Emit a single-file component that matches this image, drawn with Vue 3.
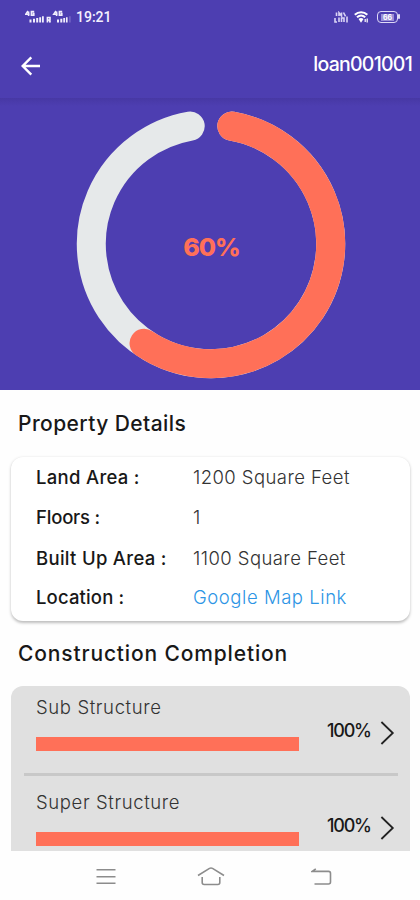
<script setup>
import { ref, computed } from 'vue'

const loanId = ref('loan001001')
const progress = ref(60)

const details = ref([
  { key: 'land', label: 'Land Area :', value: '1200 Square Feet' },
  { key: 'floors', label: 'Floors :', value: '1' },
  { key: 'built', label: 'Built Up Area :', value: '1100 Square Feet' },
  { key: 'location', label: 'Location :', value: 'Google Map Link', link: true }
])

const stages = ref([
  { key: 'sub', name: 'Sub Structure', percent: 100 },
  { key: 'super', name: 'Super Structure', percent: 100 }
])

// ring geometry: the arc leaves a 20 degree gap at the top
const radius = 119.7
const gap = 10

const point = (deg) => {
  const rad = (deg * Math.PI) / 180
  const x = 135 + radius * Math.sin(rad)
  const y = 135 - radius * Math.cos(rad)
  return `${x.toFixed(2)} ${y.toFixed(2)}`
}

const arc = (from, to) => {
  const large = to - from > 180 ? 1 : 0
  return `M${point(from)} A${radius} ${radius} 0 ${large} 1 ${point(to)}`
}

const track = computed(() => arc(gap, 360 - gap))
const filled = computed(() =>
  arc(gap, gap + ((360 - gap * 2) * progress.value) / 100)
)
</script>

<template>
  <div class="screen">
    <header class="top">
      <div class="status">
        <div class="status-left">
          <svg class="signal" width="46" height="14" viewBox="0 0 46 14">
            <g fill="none" stroke="#f1eefd" stroke-width="1.6">
              <path d="M3 1 L.8 4.2 H4.6 M3.6 1.6 V6" />
              <path d="M9.2 1.6 H6.4 V5.2 H8.8 V3.6 H7.6" />
              <path d="M31 1 L28.8 4.2 H32.6 M31.6 1.6 V6" />
              <path d="M37.2 1.6 H34.4 V5.2 H36.8 V3.6 H35.6" />
              <path d="M22.4 12.5 V7.5 H25 V10 H22.4 M24 10 L25.4 12.5" />
            </g>
            <g fill="#f1eefd">
              <path d="M4.5 9.5h2v3h-2z M8 8.8h2v3.7h-2z M11.2 8h2v4.5h-2z M14.2 7.2h1.9v5.3h-1.9z M17 6.3h1.8v6.2h-1.8z" />
              <path d="M32 9.5h2v3h-2z M35.3 8.8h2v3.7h-2z M38.3 8h1.8v4.5h-1.8z M41 7.2h1.6v5.3h-1.6z" />
            </g>
            <path d="M44.3 6.3h1.2v6.2h-1.2z" fill="#8273cb" />
          </svg>
          <span class="clock">19:21</span>
        </div>
        <div class="status-right">
          <svg width="15" height="13" viewBox="0 0 15 13">
            <g fill="none" stroke="#d9d3f5" stroke-width="1.6">
              <path d="M2.5 1.5 V5 M5 5 V1.8 L7.5 5 V1.5 M9.5 1.5 L11.5 5.4" />
              <path d="M1 7 V11 H3 M5 6.5 V11 M7.5 11 V7 H10 V11 M13 5.5 V11.5" />
            </g>
          </svg>
          <svg width="15" height="13" viewBox="0 0 15 13">
            <path
              d="M.8 3.8 C4.5 .4 9.8 .4 13.3 3.8 M3 6.3 C5.5 4.1 8.7 4.1 11.2 6.3"
              fill="none"
              stroke="#fff"
              stroke-width="2.1"
            />
            <path d="M4.6 8 Q7 6.2 9.5 8 L7 11.8Z" fill="#fff" />
            <path d="M11.2 8v3 M13.2 7.5v4" stroke="#fff" stroke-width="1.2" />
          </svg>
          <div class="battery"><span>66</span></div>
        </div>
      </div>
      <div class="bar">
        <button class="back" aria-label="Back">
          <svg width="20" height="20" viewBox="0 0 20 20">
            <path
              d="M19 10 H2 M10.3 1.4 L1.7 10 L10.3 18.6"
              fill="none"
              stroke="#fff"
              stroke-width="2.4"
            />
          </svg>
        </button>
        <h1 class="loan">{{ loanId }}</h1>
      </div>
    </header>

    <section class="hero">
      <svg class="ring" width="270" height="270" viewBox="0 0 270 270">
        <path :d="track" class="ring-track" />
        <path :d="filled" class="ring-fill" />
        <text x="135.5" y="146.6" class="ring-text">{{ progress }}%</text>
      </svg>
    </section>

    <main class="content">
      <h2 class="heading property">Property Details</h2>
      <div class="card">
        <div
          v-for="item in details"
          :key="item.key"
          class="row"
          :class="item.key"
        >
          <span class="label">{{ item.label }}</span>
          <span class="value" :class="{ link: item.link }">{{ item.value }}</span>
        </div>
      </div>

      <h2 class="heading construction">Construction Completion</h2>
      <div class="stages">
        <div
          v-for="stage in stages"
          :key="stage.key"
          class="stage"
          :class="stage.key"
        >
          <div class="stage-main">
            <div class="stage-name">{{ stage.name }}</div>
            <div class="meter">
              <div class="meter-fill" :style="{ width: stage.percent + '%' }"></div>
            </div>
          </div>
          <span class="percent">{{ stage.percent }}%</span>
          <svg class="chevron" width="15" height="26" viewBox="0 0 15 26">
            <path
              d="M1.4 2 L12.8 13 L1.4 24"
              fill="none"
              stroke="#222"
              stroke-width="1.8"
            />
          </svg>
        </div>
      </div>
    </main>

    <nav class="nav">
      <svg class="menu" width="20" height="18" viewBox="0 0 20 18">
        <path d="M.5 1.7H19.5 M.5 8.7H19.5 M.5 15.3H19.5" />
      </svg>
      <svg class="home" width="28" height="19" viewBox="0 0 28 19">
        <path d="M1 8.5 L12.5 1.4 Q14 .6 15.5 1.4 L27 8.5 M5.2 10 V15.5 Q5.2 17.5 7.2 17.5 H20.8 Q22.8 17.5 22.8 15.5 V10" />
      </svg>
      <svg class="return" width="21" height="18" viewBox="0 0 21 18">
        <path d="M4.8 .8 L1.3 3.4 H17.5 Q19.5 3.4 19.5 5.4 V14 Q19.5 16 17.5 16 H3.5" />
      </svg>
    </nav>
  </div>
</template>

<style>
body {
  background: #fefefe;
  overflow: hidden;
}
</style>

<style scoped>
.screen {
  width: 420px;
  height: 900px;
  display: flex;
  flex-direction: column;
  overflow: hidden;
  background: #fefefe;
  color: #181818;
  font-family: Inter, 'Noto Sans', sans-serif;
}
.top {
  height: 98px;
  flex: none;
  background: #4d3eb1;
}
.status {
  height: 34px;
  display: flex;
  justify-content: space-between;
  align-items: center;
  padding: 0 22px 0 25px;
}
.status-left {
  display: flex;
  align-items: center;
  gap: 5px;
}
.signal {
  margin-top: -1px;
}
.clock {
  color: #f4f1ff;
  font-family: Roboto, sans-serif;
  font-size: 14px;
  font-weight: 500;
  line-height: 16px;
}
.status-right {
  display: flex;
  align-items: center;
  gap: 5px;
}
.battery {
  position: relative;
  box-sizing: border-box;
  width: 21px;
  height: 12px;
  margin-left: 3px;
  border: 1.5px solid #ded9f7;
  border-radius: 4px;
  display: flex;
  align-items: center;
  justify-content: center;
}
.battery::after {
  content: '';
  position: absolute;
  top: 2px;
  right: -3px;
  width: 2px;
  height: 5px;
  border-radius: 1px;
  background: #ded9f7;
}
.battery span {
  padding: 0 2px;
  background: #9b8fd7;
  color: #fff;
  font-size: 7px;
  font-weight: 700;
  line-height: 7px;
}
.bar {
  height: 64px;
  display: flex;
  justify-content: space-between;
  align-items: center;
  padding: 0 8px 0 21px;
}
.back {
  display: flex;
  padding: 0;
  border: none;
  background: none;
}
.loan {
  margin: 0 0 4px;
  color: #fff;
  font-size: 19.5px;
  font-weight: 500;
  line-height: 24px;
  letter-spacing: -0.75px;
}
.hero {
  height: 291.5px;
  flex: none;
  display: flex;
  justify-content: center;
  background: linear-gradient(#4738a4, #4d3eb1 8px);
}
.ring {
  margin: 11px 0 0 2px;
}
.ring-track,
.ring-fill {
  fill: none;
  stroke-width: 29;
  stroke-linecap: round;
}
.ring-track {
  stroke: #e6e9ea;
}
.ring-fill {
  stroke: #ff7058;
}
.ring-text {
  fill: #ff7058;
  font-size: 25px;
  font-weight: 800;
  letter-spacing: -1.1px;
  text-anchor: middle;
}
.content {
  flex: 1;
  min-height: 0;
  overflow: hidden;
  padding: 0 10px 0 11px;
}
.heading {
  margin: 0 0 0 7px;
  font-size: 21px;
  font-weight: 550;
  line-height: 30px;
  letter-spacing: 0.42px;
  white-space: nowrap;
}
.property {
  padding-top: 19px;
}
.construction {
  padding-top: 18px;
  letter-spacing: 0.85px;
}
.card {
  height: 164.5px;
  margin-top: 18px;
  padding-left: 25px;
  box-sizing: border-box;
  border-radius: 12px;
  background: #fff;
  box-shadow: 0 1.5px 3px rgba(0, 0, 0, 0.26);
}
.row {
  display: flex;
  align-items: center;
  height: 40.5px;
  font-size: 18.5px;
  white-space: nowrap;
}
.location {
  height: 37.5px;
}
.label {
  width: 157px;
  font-weight: 500;
  letter-spacing: 0.3px;
}
.floors .label {
  letter-spacing: -0.2px;
}
.location .label {
  letter-spacing: 0.15px;
}
.value {
  color: #333;
  font-weight: 300;
  letter-spacing: 0.43px;
}
.link {
  color: #2d95e5;
  letter-spacing: 0.55px;
}
.stages {
  margin-top: 16.5px;
  padding: 0 12px 0 13px;
  border-radius: 12px 12px 0 0;
  background: #e0e0e0;
}
.stage {
  display: flex;
  height: 87px;
  border-bottom: 3px solid #c8c8c8;
  padding-left: 12px;
}
.stage + .stage {
  padding-top: 5px;
}
.stage-main {
  width: 263px;
}
.stage-name {
  padding-top: 6px;
  color: #333;
  font-size: 18.5px;
  font-weight: 300;
  line-height: 30px;
  letter-spacing: 0.62px;
}
.meter {
  height: 14px;
  margin-top: 15px;
}
.meter-fill {
  height: 100%;
  background: #ff7058;
}
.percent {
  width: 43px;
  margin: 30px 10px 0 28px;
  font-size: 18px;
  font-weight: 500;
  line-height: 30px;
  letter-spacing: -1.2px;
}
.chevron {
  margin-top: 34px;
}
.nav {
  height: 49px;
  flex: none;
  display: flex;
  align-items: center;
  justify-content: center;
  background: #fefefe;
}
.nav svg {
  margin-top: 2px;
}
.menu {
  margin-left: 7px;
}
.home {
  margin-left: 81px;
  margin-right: 86px;
}
.nav path {
  fill: none;
  stroke: #8c8c8c;
  stroke-width: 1.6;
}
</style>
